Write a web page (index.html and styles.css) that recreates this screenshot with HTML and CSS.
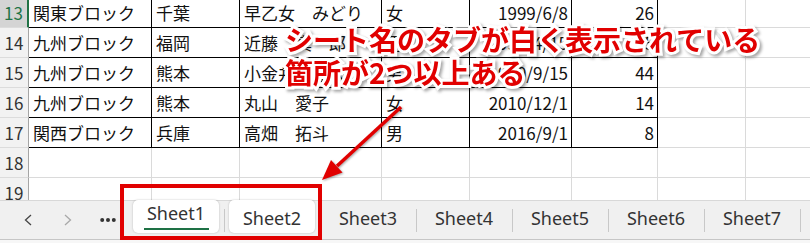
FILE: index.html
```html
<!DOCTYPE html>
<html lang="ja">
<head>
  <meta charset="UTF-8" />
  <meta name="viewport" content="width=device-width, initial-scale=1.0"/>
  <title>シート</title>
  <link rel="stylesheet" href="styles.css">
</head>
<body>
  <div class="page">
    <div class="sheet">
      <div class="row">
        <div class="rh cur">13</div>
        <div class="c d">関東ブロック</div>
        <div class="c d">千葉</div>
        <div class="c d">早乙女　みどり</div>
        <div class="c d">女</div>
        <div class="c d n">1999/6/8</div>
        <div class="c d n">26</div>
        <div class="c"></div>
        <div class="c"></div>
      </div>
      <div class="row">
        <div class="rh">14</div>
        <div class="c d">九州ブロック</div>
        <div class="c d">福岡</div>
        <div class="c d">近藤　真一郎</div>
        <div class="c d">男</div>
        <div class="c d n">1990/4/15</div>
        <div class="c d n">35</div>
        <div class="c"></div>
        <div class="c"></div>
      </div>
      <div class="row">
        <div class="rh">15</div>
        <div class="c d">九州ブロック</div>
        <div class="c d">熊本</div>
        <div class="c d">小金井　翔太</div>
        <div class="c d">男</div>
        <div class="c d n">1980/9/15</div>
        <div class="c d n">44</div>
        <div class="c"></div>
        <div class="c"></div>
      </div>
      <div class="row">
        <div class="rh">16</div>
        <div class="c d">九州ブロック</div>
        <div class="c d">熊本</div>
        <div class="c d">丸山　愛子</div>
        <div class="c d">女</div>
        <div class="c d n">2010/12/1</div>
        <div class="c d n">14</div>
        <div class="c"></div>
        <div class="c"></div>
      </div>
      <div class="row">
        <div class="rh">17</div>
        <div class="c d">関西ブロック</div>
        <div class="c d">兵庫</div>
        <div class="c d">高畑　拓斗</div>
        <div class="c d">男</div>
        <div class="c d n">2016/9/1</div>
        <div class="c d n">8</div>
        <div class="c"></div>
        <div class="c"></div>
      </div>
      <div class="row">
        <div class="rh">18</div>
        <div class="c"></div><div class="c"></div><div class="c"></div><div class="c"></div>
        <div class="c"></div><div class="c"></div><div class="c"></div><div class="c"></div>
      </div>
      <div class="row">
        <div class="rh">19</div>
        <div class="c"></div><div class="c"></div><div class="c"></div><div class="c"></div>
        <div class="c"></div><div class="c"></div><div class="c"></div><div class="c"></div>
      </div>
    </div>

    <div class="tabbar">
      <div class="nav">
        <span class="btn">
          <svg width="10" height="12" viewBox="0 0 10 12"><path d="M8 1 L2.5 6 L8 11" fill="none" stroke="#444" stroke-width="1.3"/></svg>
        </span>
        <span class="btn">
          <svg width="10" height="12" viewBox="0 0 10 12"><path d="M2 1 L7.5 6 L2 11" fill="none" stroke="#a8a8a8" stroke-width="1.3"/></svg>
        </span>
        <span class="btn">
          <svg width="16" height="6" viewBox="0 0 16 6"><circle cx="2.2" cy="3" r="2"/><circle cx="8" cy="3" r="2"/><circle cx="13.8" cy="3" r="2"/></svg>
        </span>
      </div>
      <div class="tab first"><span class="face active">Sheet1</span></div>
      <div class="tab"><span class="face sel">Sheet2</span></div>
      <div class="tab"><span class="face">Sheet3</span></div>
      <div class="tab"><span class="face">Sheet4</span></div>
      <div class="tab"><span class="face">Sheet5</span></div>
      <div class="tab"><span class="face">Sheet6</span></div>
      <div class="tab"><span class="face">Sheet7</span></div>
      <div class="tab"></div>
    </div>
    <div class="strip"></div>

    <!-- annotation -->
    <div class="note">シート名のタブが白く表示されている<br>箇所が2つ以上ある</div>
    <svg class="marks" width="810" height="243" viewBox="0 0 810 243">
      <g class="arrow">
        <line x1="401" y1="107" x2="337" y2="166" stroke="#e10000" stroke-width="3.5"/>
        <polygon points="322,180 342.5,172.5 331,160" fill="#e10000"/>
      </g>
      <rect x="122" y="186" width="198" height="52" fill="none" stroke="#e10000" stroke-width="4"/>
    </svg>
  </div>
</body>
</html>
```

FILE: styles.css
```css
body {
  margin: 0;
  padding: 0;
  background: #fff;
  overflow: hidden;
}
.page {
  position: relative;
  width: 810px;
  height: 243px;
  overflow: hidden;
  display: flex;
  flex-direction: column;
}
.sheet {
  height: 200px;
  overflow: hidden;
  flex: none;
}
.row {
  display: grid;
  grid-template-columns: 29px 123px 88px 142px 88px 102px 86px 88px 88px;
  height: 30px;
  font-family: "Noto Sans CJK JP", sans-serif;
  font-size: 17px;
  line-height: 29px;
  color: #111;
}
.row:first-child {
  margin-top: -2px;
}
.rh {
  box-sizing: border-box;
  background: #f2f2f2;
  border-right: 1px solid #a5a5a5;
  border-bottom: 1px solid #dcdcdc;
  text-align: center;
  color: #333;
}
.rh.cur {
  background: #d4d4d4;
  color: #217346;
  border-right: 2px solid #217346;
}
.c {
  box-sizing: border-box;
  border-right: 1px solid #dadada;
  border-bottom: 1px solid #dadada;
  padding-left: 4px;
  white-space: nowrap;
  overflow: hidden;
}
.c.d {
  border-right-color: #000;
  border-bottom-color: #000;
}
.c.n {
  text-align: right;
  padding-left: 0;
  padding-right: 3px;
}
.tabbar {
  flex: none;
  box-sizing: border-box;
  height: 40px;
  background: #f0f0f0;
  border-top: 1px solid #d8d8d8;
  border-bottom: 1px solid #c6c6c6;
  display: flex;
  align-items: flex-start;
  font-family: "Noto Sans", sans-serif;
  font-size: 18px;
  color: #333;
}
.nav {
  display: flex;
  padding-left: 8px;
  height: 38px;
  align-items: center;
}
.btn {
  width: 40px;
  display: flex;
  justify-content: center;
  align-items: center;
  fill: #333;
}
.tab {
  flex: none;
  box-sizing: border-box;
  width: 96px;
  height: 38px;
  padding: 0 5px;
  background: linear-gradient(#c8c8c8, #c8c8c8) 0 8px / 1px 23px no-repeat;
}
.tab.first {
  background: none;
}
.face {
  display: block;
  box-sizing: border-box;
  height: 33px;
  margin-top: -1px;
  padding-top: 6px;
  line-height: 24px;
  text-align: center;
  border-radius: 5px;
}
.face.sel,
.face.active {
  background: #fff;
  box-shadow: 0 0 2px rgba(0, 0, 0, 0.25);
}
.face.active {
  padding-top: 1px;
}
.face.active::after {
  content: "";
  display: block;
  width: 65px;
  height: 2px;
  margin: 3px auto 0;
  background: #1e7145;
}
.strip {
  flex: 1;
  background: #f7f7f7;
}
.note {
  position: absolute;
  left: 285px;
  top: 23px;
  font-family: "Noto Sans CJK JP", sans-serif;
  font-weight: bold;
  font-size: 28px;
  line-height: 33px;
  color: #e10000;
  white-space: nowrap;
  -webkit-text-stroke: 6px #fff;
  paint-order: stroke fill;
  filter: drop-shadow(2px 2px 1.5px rgba(0, 0, 0, 0.35));
}
.marks {
  position: absolute;
  left: 0;
  top: 0;
  pointer-events: none;
}
.arrow {
  filter: drop-shadow(1.5px 1.5px 1px rgba(0, 0, 0, 0.35));
}
```
